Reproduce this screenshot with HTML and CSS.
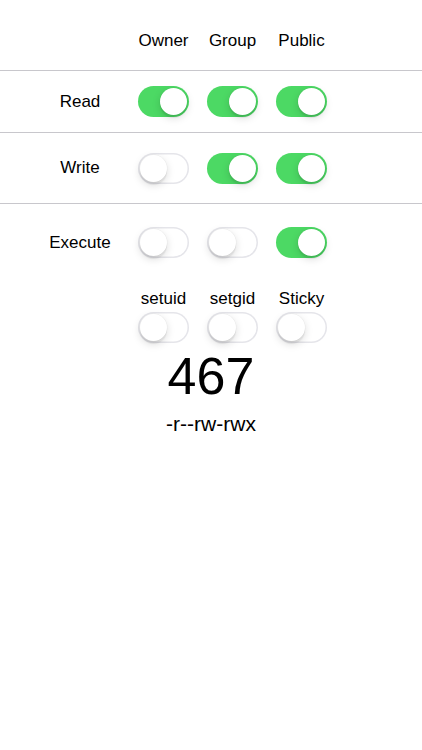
FILE: index.html
```html
<!DOCTYPE html>
<html lang="en">
<head>
  <meta charset="UTF-8">
  <meta name="viewport" content="width=device-width, initial-scale=1.0">
  <title>chmod</title>
  <link rel="stylesheet" href="styles.css">
</head>
<body>
  <div class="grid head">
    <div></div>
    <div class="cell">Owner</div>
    <div class="cell">Group</div>
    <div class="cell">Public</div>
  </div>

  <div class="grid row read">
    <div class="label">Read</div>
    <div class="switch on" data-who="0" data-bit="4" onclick="flip(this)"></div>
    <div class="switch on" data-who="1" data-bit="4" onclick="flip(this)"></div>
    <div class="switch on" data-who="2" data-bit="4" onclick="flip(this)"></div>
  </div>

  <div class="grid row write">
    <div class="label">Write</div>
    <div class="switch" data-who="0" data-bit="2" onclick="flip(this)"></div>
    <div class="switch on" data-who="1" data-bit="2" onclick="flip(this)"></div>
    <div class="switch on" data-who="2" data-bit="2" onclick="flip(this)"></div>
  </div>

  <div class="grid execute">
    <div class="label">Execute</div>
    <div class="switch" data-who="0" data-bit="1" onclick="flip(this)"></div>
    <div class="switch" data-who="1" data-bit="1" onclick="flip(this)"></div>
    <div class="switch on" data-who="2" data-bit="1" onclick="flip(this)"></div>
  </div>

  <div class="grid special">
    <div></div>
    <div class="cell">setuid</div>
    <div class="cell">setgid</div>
    <div class="cell">Sticky</div>
    <div></div>
    <div class="switch" data-who="3" data-bit="4" onclick="flip(this)"></div>
    <div class="switch" data-who="3" data-bit="2" onclick="flip(this)"></div>
    <div class="switch" data-who="3" data-bit="1" onclick="flip(this)"></div>
  </div>

  <div id="octal" class="octal">467</div>
  <div id="mode" class="mode">-r--rw-rwx</div>

  <script>
    function flip(el) {
      el.classList.toggle("on");
      update();
    }

    function update() {
      // owner, group, public, special
      const bits = [0, 0, 0, 0];
      document.querySelectorAll(".switch.on").forEach(sw => {
        bits[+sw.dataset.who] += +sw.dataset.bit;
      });

      let octal = "" + bits[0] + bits[1] + bits[2];
      if (bits[3]) octal = bits[3] + octal;
      document.getElementById("octal").innerText = octal;

      const marks = ["s", "s", "t"];
      let mode = "-";
      for (let i = 0; i < 3; i++) {
        const b = bits[i];
        const special = bits[3] & (4 >> i);
        let x = b & 1 ? "x" : "-";
        if (special) x = b & 1 ? marks[i] : marks[i].toUpperCase();
        mode += (b & 4 ? "r" : "-") + (b & 2 ? "w" : "-") + x;
      }
      document.getElementById("mode").innerText = mode;
    }
  </script>
</body>
</html>
```

FILE: styles.css
```css
/* Base */
body {
  margin: 0;
  background: #fff;
  color: #000;
  font-family: "Liberation Sans", Arial, sans-serif;
  font-size: 17px;
  line-height: 20px;
}

/* Shared column layout */
.grid {
  display: grid;
  grid-template-columns: 120px 51px 51px 51px;
  column-gap: 18px;
  align-items: center;
}

.cell {
  text-align: center;
  white-space: nowrap;
}

.label {
  padding-left: 40px;
  text-align: center;
}

/* Header */
.head {
  height: 71px;
  box-sizing: border-box;
  align-items: end;
  padding-bottom: 19px;
  border-bottom: 1px solid #c8c7cc;
}

/* Permission rows */
.row {
  box-sizing: border-box;
  border-bottom: 1px solid #c8c7cc;
}
.read {
  height: 62px;
}
.write {
  height: 71px;
}
.execute {
  padding-top: 23px;
}

/* Special bits */
.special {
  padding-top: 31px;
  row-gap: 3px;
}

/* Switch */
.switch {
  position: relative;
  width: 51px;
  height: 31px;
  box-sizing: border-box;
  border-radius: 16px;
  background: #fff;
  box-shadow: inset 0 0 0 1.5px #e5e5ea;
  cursor: pointer;
  transition: background-color 0.2s ease;
}
.switch::after {
  content: "";
  position: absolute;
  top: 2px;
  left: 2px;
  width: 27px;
  height: 27px;
  border-radius: 50%;
  background: #fff;
  box-shadow: 0 3px 8px rgba(0, 0, 0, 0.15), 0 3px 1px rgba(0, 0, 0, 0.06), 0 0 0 0.5px rgba(0, 0, 0, 0.04);
  transition: left 0.2s ease;
}
.switch.on {
  background: #4cd964;
  box-shadow: none;
}
.switch.on::after {
  left: 22px;
}

/* Result */
.octal {
  margin-top: 7px;
  font-size: 52px;
  line-height: 52px;
  text-align: center;
}
.mode {
  margin-top: 10px;
  font-size: 21px;
  line-height: 24px;
  text-align: center;
}
```
